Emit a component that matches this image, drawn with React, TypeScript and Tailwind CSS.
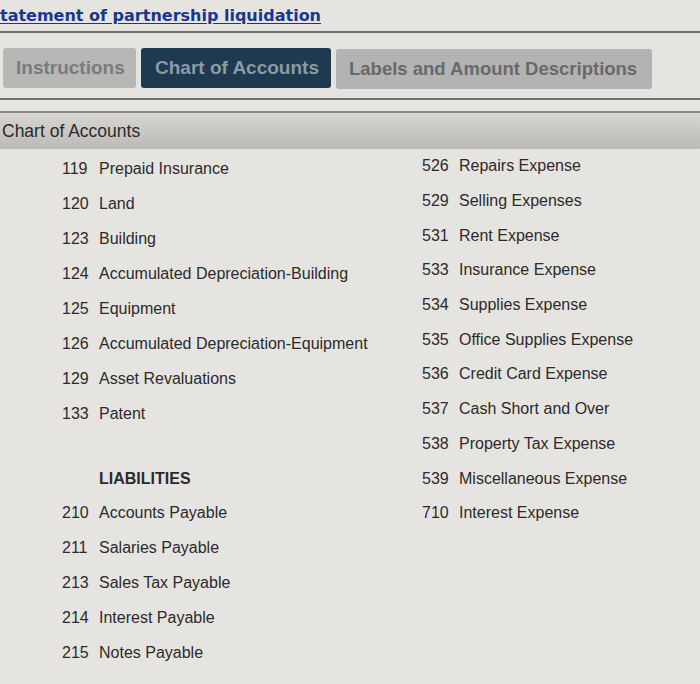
import React from "react"

const left: [string, string][] = [
  ["119", "Prepaid Insurance"],
  ["120", "Land"],
  ["123", "Building"],
  ["124", "Accumulated Depreciation-Building"],
  ["125", "Equipment"],
  ["126", "Accumulated Depreciation-Equipment"],
  ["129", "Asset Revaluations"],
  ["133", "Patent"],
]

const liabilities: [string, string][] = [
  ["210", "Accounts Payable"],
  ["211", "Salaries Payable"],
  ["213", "Sales Tax Payable"],
  ["214", "Interest Payable"],
  ["215", "Notes Payable"],
]

const right: [string, string][] = [
  ["526", "Repairs Expense"],
  ["529", "Selling Expenses"],
  ["531", "Rent Expense"],
  ["533", "Insurance Expense"],
  ["534", "Supplies Expense"],
  ["535", "Office Supplies Expense"],
  ["536", "Credit Card Expense"],
  ["537", "Cash Short and Over"],
  ["538", "Property Tax Expense"],
  ["539", "Miscellaneous Expense"],
  ["710", "Interest Expense"],
]

function Row({ num, name, h = "h-[35px]" }: { num: string; name: string; h?: string }) {
  return (
    <div className={`flex items-center ${h}`}>
      <span className="w-[37px]">{num}</span>
      <span>{name}</span>
    </div>
  )
}

export default function App() {
  return (
    <div className="w-[700px] h-[684px] overflow-hidden bg-[#e6e4e1] text-[#2b2b2b] font-['Liberation_Sans',Arial,sans-serif]">
      {/* Title */}
      <div className="h-[33px] pt-[4px] border-b-2 border-[#6e6e6e]">
        <span className="font-['DejaVu_Sans',Verdana,sans-serif] font-bold text-[16px] text-[#1b3591] underline underline-offset-2">
          tatement of partnership liquidation
        </span>
      </div>

      {/* Tabs */}
      <div className="flex gap-[5px] pl-[3px] pt-[15px] h-[67px] border-b-2 border-[#707070]">
        <div className="w-[133px] h-[40px] rounded-[3px] bg-[#b7b7b6] text-[#7b7b7b] text-[19px] font-bold flex items-center pl-[13px]">
          Instructions
        </div>
        <div className="w-[190px] h-[40px] rounded-[3px] bg-[#1d3a50] text-[#8b9aa5] text-[19px] font-bold flex items-center pl-[14px]">
          Chart of Accounts
        </div>
        <div className="w-[316px] h-[40px] mt-[1px] rounded-[3px] bg-[#b3b3b3] text-[#696969] text-[18.5px] font-bold flex items-center pl-[13px]">
          Labels and Amount Descriptions
        </div>
      </div>

      <div className="h-[13px] border-b-2 border-[#8a8a8a]" />

      {/* Header bar */}
      <div className="h-[36px] bg-gradient-to-b from-[#d8d6d3] to-[#bcbab8] flex items-center pl-[2px] text-[17.5px] text-[#2a2a2a]">
        Chart of Accounts
      </div>

      {/* Accounts */}
      <div className="flex text-[16px]">
        <div className="w-[422px] pl-[62px] pt-[2px]">
          {left.map(([n, t]) => (
            <Row key={n} num={n} name={t} />
          ))}
          <div className="h-[30px]" />
          <div className="h-[35px] flex items-center pl-[37px] font-bold">LIABILITIES</div>
          {liabilities.map(([n, t]) => (
            <Row key={n} num={n} name={t} h="h-[34.8px]" />
          ))}
        </div>
        <div>
          {right.map(([n, t]) => (
            <Row key={n} num={n} name={t} h="h-[34.7px]" />
          ))}
        </div>
      </div>
    </div>
  )
}
